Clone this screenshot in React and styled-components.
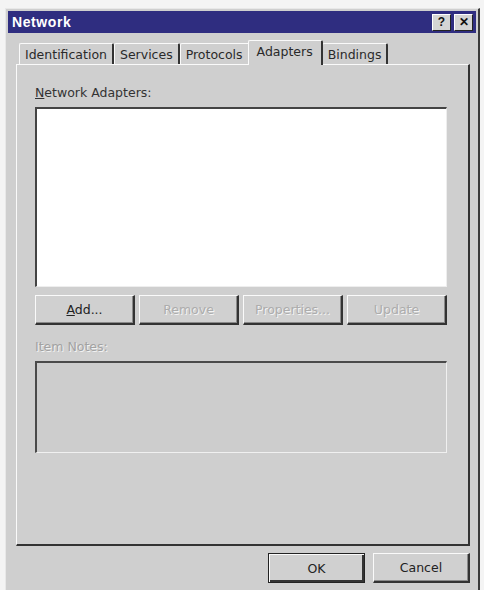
import React from 'react';
import styled, { createGlobalStyle } from 'styled-components';

const Global = createGlobalStyle`
  body {
    margin: 0;
    background: #f4f4f4;
    font-family: "DejaVu Sans", "Liberation Sans", Arial, sans-serif;
  }
`;

const Window = styled.div`
  margin: 8px 4px 0 5px;
  height: 582px;
  box-sizing: border-box;
  background: #cfcfcf;
  border-top: 1px solid #e8e8e8;
  border-left: 1px solid #e8e8e8;
  border-right: 2px solid #3a3a3a;
  padding: 2px 2px 0 2px;
  display: flex;
  flex-direction: column;
`;

const TitleBar = styled.div`
  height: 22px;
  background: #2f2d80;
  display: flex;
  align-items: center;
  justify-content: space-between;
  padding: 0 3px 0 4px;
`;

const Title = styled.span`
  color: #fff;
  font-family: "Liberation Sans", Arial, sans-serif;
  font-weight: bold;
  font-size: 14px;
  letter-spacing: 0.6px;
`;

const Caps = styled.div`
  display: flex;
  gap: 3px;
`;

const CapButton = styled.div`
  width: 19px;
  height: 17px;
  box-sizing: border-box;
  background: #d4d4d4;
  border-top: 1px solid #fff;
  border-left: 1px solid #fff;
  border-right: 1px solid #222;
  border-bottom: 1px solid #222;
  display: flex;
  align-items: center;
  justify-content: center;
  font-family: "Liberation Sans", Arial, sans-serif;
  font-weight: bold;
  font-size: 12px;
  color: #111;
`;

const Body = styled.div`
  flex: 1;
  display: flex;
  flex-direction: column;
  padding: 7px 6px 0 8px;
`;

const TabStrip = styled.div`
  display: flex;
  align-items: flex-end;
  padding-left: 3px;
  height: 24px;
`;

const Tab = styled.div`
  height: 21px;
  box-sizing: border-box;
  padding: 0 ${p => (p.active ? 8 : 5)}px;
  margin: ${p => (p.active ? '0 -1px -1px -2px' : '0')};
  display: flex;
  align-items: center;
  font-size: 12.5px;
  color: #2a2a2a;
  background: #cfcfcf;
  border-top: 1px solid #fafafa;
  border-left: 1px solid #fafafa;
  border-right: 2px solid #333;
  border-top-left-radius: 2px;
  border-top-right-radius: 2px;
  position: relative;
  z-index: ${p => (p.active ? 2 : 1)};
  ${p => p.active && 'height: 25px; padding-bottom: 3px;'}
`;

const Panel = styled.div`
  height: 482px;
  box-sizing: border-box;
  border-top: 1px solid #fafafa;
  border-left: 1px solid #fafafa;
  border-right: 2px solid #333;
  border-bottom: 2px solid #333;
  padding: 20px 21px 0 18px;
  display: flex;
  flex-direction: column;
`;

const Label = styled.div`
  font-size: 12.5px;
  color: ${p => (p.disabled ? '#a2a2a2' : '#333')};
  text-shadow: ${p => (p.disabled ? '1px 1px 0 #f2f2f2' : 'none')};
  margin-bottom: 7px;
  u { text-decoration: underline; }
`;

const ListBox = styled.div`
  height: 180px;
  box-sizing: border-box;
  background: #fff;
  border-top: 2px solid #444;
  border-left: 2px solid #444;
  border-right: 1px solid #eee;
  border-bottom: 1px solid #eee;
`;

const ButtonRow = styled.div`
  display: grid;
  grid-template-columns: repeat(4, 1fr);
  gap: 4px;
  margin: 8px 0 14px;
`;

const Button = styled.div`
  height: 30px;
  box-sizing: border-box;
  background: #d0d0d0;
  border-top: 1px solid #fafafa;
  border-left: 1px solid #fafafa;
  border-right: 2px solid #333;
  border-bottom: 2px solid #333;
  display: flex;
  align-items: center;
  justify-content: center;
  font-size: 12.5px;
  color: ${p => (p.disabled ? '#acacac' : '#222')};
  text-shadow: ${p => (p.disabled ? '1px 1px 0 #f4f4f4' : 'none')};
  box-shadow: inset -1px -1px 0 #8a8a8a;
`;

const NotesBox = styled.div`
  height: 92px;
  box-sizing: border-box;
  background: #cdcdcd;
  border-top: 2px solid #4a4a4a;
  border-left: 2px solid #4a4a4a;
  border-right: 1px solid #f0f0f0;
  border-bottom: 1px solid #f0f0f0;
`;

const Footer = styled.div`
  display: flex;
  justify-content: flex-end;
  gap: 8px;
  padding: 7px 0 0;
`;

const DialogButton = styled(Button)`
  width: ${p => p.w}px;
  height: 30px;
  ${p => p.def && `
    border: 1px solid #222;
    box-shadow: inset 1px 1px 0 #fafafa, inset -2px -2px 0 #333;
  `}
`;

export default function App() {
  const tabs = ['Identification', 'Services', 'Protocols', 'Adapters', 'Bindings'];
  return (
    <>
      <Global />
      <Window>
        <TitleBar>
          <Title>Network</Title>
          <Caps>
            <CapButton>?</CapButton>
            <CapButton>✕</CapButton>
          </Caps>
        </TitleBar>
        <Body>
          <TabStrip>
            {tabs.map(t => (
              <Tab key={t} active={t === 'Adapters'}>{t}</Tab>
            ))}
          </TabStrip>
          <Panel>
            <Label><u>N</u>etwork Adapters:</Label>
            <ListBox />
            <ButtonRow>
              <Button><span><u>A</u>dd...</span></Button>
              <Button disabled>Remove</Button>
              <Button disabled>Properties...</Button>
              <Button disabled>Update</Button>
            </ButtonRow>
            <Label disabled>Item Notes:</Label>
            <NotesBox />
          </Panel>
          <Footer>
            <DialogButton def w={97}>OK</DialogButton>
            <DialogButton w={97}>Cancel</DialogButton>
          </Footer>
        </Body>
      </Window>
    </>
  );
}
